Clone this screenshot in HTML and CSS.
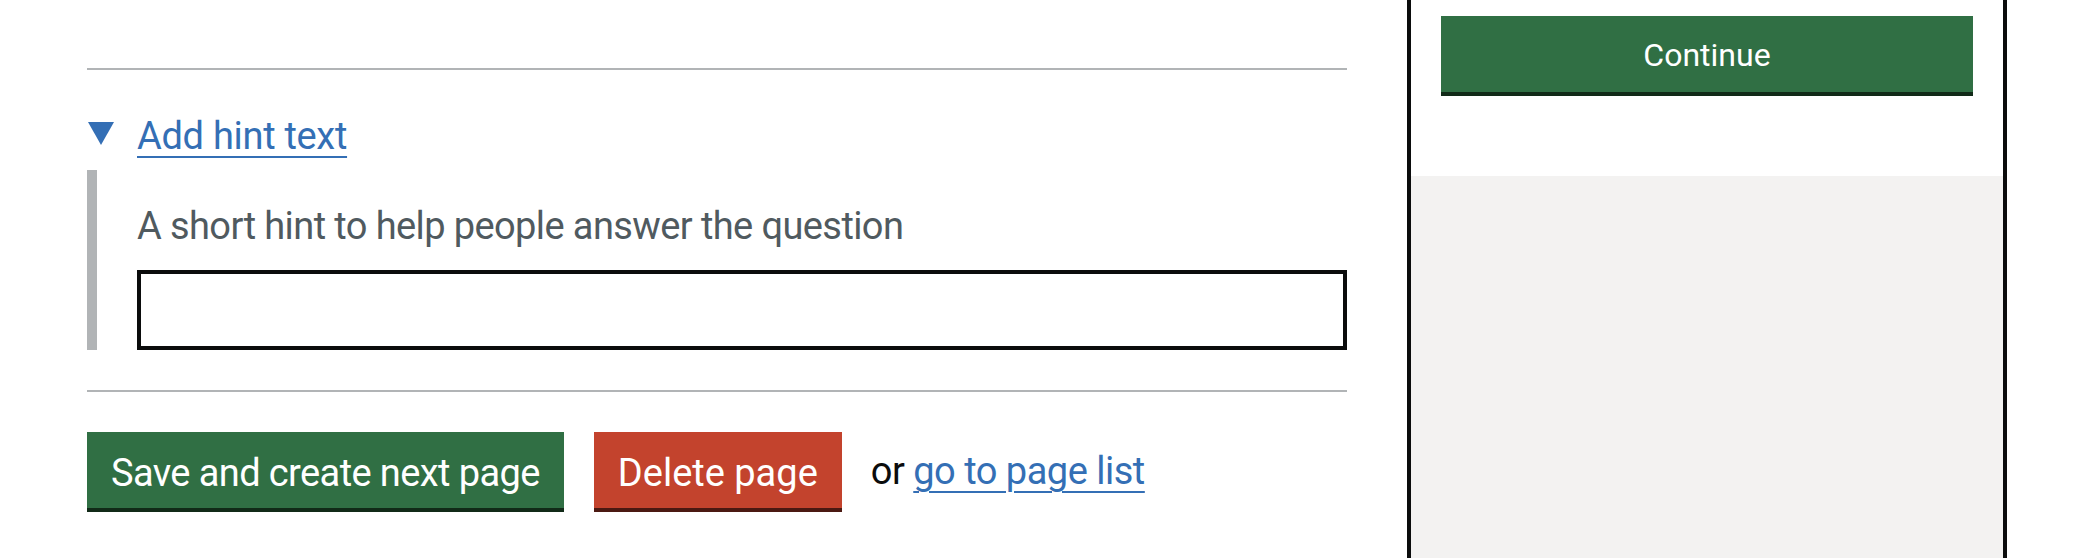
FILE: index.html
```html
<!DOCTYPE html>
<html lang="en">
<head>
<meta charset="utf-8">
<title>Edit page</title>
<link rel="stylesheet" href="styles.css">
</head>
<body>
<div class="layout">
  <main class="editor">
    <hr class="divider divider-top">
    <div class="details">
      <div class="summary">
        <span class="triangle"></span>
        <a class="link summary-link" href="#">Add hint text</a>
      </div>
      <div class="details-text">
        <p class="hint">A short hint to help people answer the question</p>
        <input class="input" type="text" aria-label="Hint text">
      </div>
    </div>
    <hr class="divider divider-bottom">
    <div class="actions">
      <button class="button button-green">Save and create next page</button>
      <button class="button button-red">Delete page</button>
      <span class="or-text">or <a class="link" href="#">go to page list</a></span>
    </div>
  </main>
  <aside class="preview">
    <div class="preview-top">
      <button class="button button-green button-block">Continue</button>
    </div>
    <div class="preview-rest"></div>
  </aside>
</div>
</body>
</html>
```

FILE: styles.css
```css
html, body {
  margin: 0;
  padding: 0;
  background: #ffffff;
}

body {
  font-family: Roboto, "Noto Sans", "Liberation Sans", Arial, sans-serif;
  color: #0b0c0c;
  height: 558px;
  overflow: hidden;
}

.layout {
  display: flex;
  align-items: stretch;
  height: 558px;
}

.editor {
  margin-left: 87px;
  width: 1260px;
  padding-top: 68px;
}

.divider {
  margin: 0;
  border: 0;
  border-top: 2px solid #b1b4b6;
  height: 0;
}

.details {
  margin-top: 40px;
}

.summary {
  display: flex;
  align-items: flex-start;
  height: 50px;
  margin-bottom: 10px;
}

.triangle {
  width: 0;
  height: 0;
  border-left: 13px solid transparent;
  border-right: 13px solid transparent;
  border-top: 23px solid #346fb5;
  margin-top: 12px;
  margin-left: 1px;
  margin-right: 23px;
}

.link {
  color: #346fb5;
  text-decoration: underline;
  text-decoration-thickness: 2px;
  text-underline-offset: 7px;
}

.summary-link {
  font-size: 38px;
  line-height: 50px;
  letter-spacing: -0.3px;
  padding-top: 1px;
}

.details-text {
  border-left: 10px solid #b1b4b6;
  padding: 30px 0 0 40px;
}

.hint {
  margin: 0 0 20px;
  font-size: 38px;
  line-height: 50px;
  letter-spacing: -0.6px;
  color: #505a5f;
  position: relative;
  top: 1px;
}

.input {
  display: block;
  box-sizing: border-box;
  width: 1210px;
  height: 80px;
  margin: 0;
  border: 4px solid #0b0c0c;
  border-radius: 0;
  background: #ffffff;
  font-family: inherit;
  font-size: 38px;
  padding: 10px;
}

.divider-bottom {
  margin-top: 40px;
}

.actions {
  display: flex;
  align-items: flex-start;
  margin-top: 40px;
}

.button {
  font-family: inherit;
  font-size: 38px;
  line-height: 38px;
  letter-spacing: -0.6px;
  padding: 18px 20px 12px;
  border: 4px solid transparent;
  border-radius: 0;
  color: #ffffff;
  cursor: pointer;
  margin: 0;
}

.button-green {
  background: #306f44;
  box-shadow: 0 4px 0 #112a18;
}

.button-red {
  background: #c3432d;
  box-shadow: 0 4px 0 #4b1912;
  margin-left: 30px;
  letter-spacing: 0;
}

.or-text {
  margin-left: 29px;
  font-size: 38px;
  line-height: 78px;
  letter-spacing: -0.5px;
  color: #0b0c0c;
}

.preview {
  margin-left: 60px;
  width: 592px;
  border-left: 4px solid #0b0c0c;
  border-right: 4px solid #0b0c0c;
  display: flex;
  flex-direction: column;
}

.preview-top {
  background: #ffffff;
  height: 176px;
  box-sizing: border-box;
  padding: 16px 30px 0;
}

.button-block {
  display: block;
  width: 100%;
  text-align: center;
  font-size: 32px;
  line-height: 38px;
  letter-spacing: 0;
  padding: 16px 20px 14px;
}

.preview-rest {
  flex: 1;
  background: #f3f2f1;
}
```
